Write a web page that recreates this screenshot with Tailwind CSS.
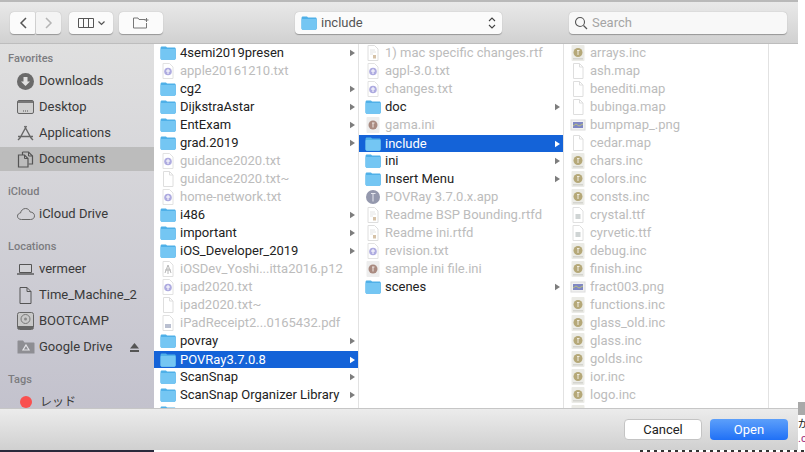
<!doctype html>
<html lang="ja">
<head>
<meta charset="UTF-8" />
<title>Open</title>
<script src="https://cdn.jsdelivr.net/npm/@tailwindcss/browser@4"></script>
</head>
<body class="w-[805px] h-[452px] overflow-hidden bg-white font-['Roboto','Noto_Sans_CJK_JP',sans-serif] text-[13px] text-[#222]">
<svg class="hidden">
  <symbol id="folder" viewBox="0 0 16 14"><path d="M.5 2.200C.5 1.200 1.100.6 2 .6h3.600c.7 0 1 .7 1.700 1h7c.9 0 1.500.6 1.500 1.500v9.200c0 .9-.6 1.500-1.500 1.500H2c-.9 0-1.500-.6-1.500-1.500z" fill="#4fb0e8"/><path d="M.5 4c0-.6.400-1 1-1h13c.6 0 1 .4 1 1v8.300c0 .9-.6 1.400-1.500 1.400H2c-.9 0-1.500-.5-1.500-1.400z" fill="#74c6f3"/></symbol>
  <symbol id="file" viewBox="0 0 16 16"><path d="M3.500.5h6l3.500 3.500v11.500h-9.500z M9.500.5v3.500h3.500" fill="#fff" stroke="#dedede"/></symbol>
  <symbol id="txt" viewBox="0 0 16 16"><path d="M3 .5h6.500l3.500 3.500v11.500h-10z" fill="#fff" stroke="#e2e2e2"/><circle cx="8" cy="8.500" r="3.800" fill="#aeabe0"/><path d="M6 8h4M8 6v5" stroke="#fff"/></symbol>
  <symbol id="rtf" viewBox="0 0 16 16"><path d="M3 .5h6.500l3.500 3.500v11.500h-10z" fill="#fff" stroke="#dedede"/><path d="M5 5h5M5 7h6M5 9h3" stroke="#e4e4e4"/><rect x="8" y="10" width="3" height="3.500" fill="#d6c2a8"/></symbol>
  <symbol id="inc" viewBox="0 0 16 16"><rect x="1.500" y="0" width="13" height="16" rx="1" fill="#ebebe6"/><circle cx="8" cy="7.500" r="4.500" fill="#b5a878"/><path d="M7 5.500h2.500M8 5.500v4.500" stroke="#f0ece0"/><rect x="3" y="13" width="10" height="1.500" fill="#d4d4ce"/></symbol>
  <symbol id="ini" viewBox="0 0 16 16"><rect x="1.500" y="0" width="13" height="16" rx="1" fill="#ededed"/><circle cx="8" cy="8" r="4.500" fill="#a98a80"/><path d="M7 6h2.500M8 6v4.500" stroke="#efe6e2"/></symbol>
  <symbol id="ttf" viewBox="0 0 16 16"><path d="M3 .5h6.500l3.500 3.500v11.500h-10z" fill="#fff" stroke="#e0e0e0"/><rect x="5.500" y="7" width="5" height="5" fill="#cfd4d4"/></symbol>
  <symbol id="png" viewBox="0 0 16 16"><rect x="1" y="3" width="14" height="10" fill="#f1f1f1" stroke="#dcdcdc"/><rect x="3" y="5" width="10" height="6" fill="#7f87c4"/><path d="M3 9l3-2 3 2 4-2" stroke="#b9c07e" fill="none"/></symbol>
  <symbol id="p12" viewBox="0 0 16 16"><path d="M3 .5h6.500l3.500 3.500v11.500h-10z" fill="#fff" stroke="#e0e0e0"/><path d="M8 4l-3 8M8 4l3 8M5 9h6M8 7v6" stroke="#b8b8b8" fill="none"/></symbol>
  <symbol id="pdf" viewBox="0 0 16 16"><path d="M3 .5h6.500l3.500 3.500v11.500h-10z" fill="#fff" stroke="#e0e0e0"/><rect x="5" y="9" width="6" height="4" fill="#b9bfd0"/></symbol>
  <symbol id="app" viewBox="0 0 16 16"><circle cx="8" cy="8" r="7" fill="#9498ad"/><path d="M6 4.500h4.500M8 4.500v8" stroke="#e6e7ee"/></symbol>
  <symbol id="arrow" viewBox="0 0 6 8"><path d="M0 0l6 4-6 4z" fill="currentColor"/></symbol>
</svg>

<div class="flex h-[450px]">
  <!-- Dialog -->
  <div class="w-[798px] flex flex-col shrink-0">
    <div class="h-[2px] bg-[#b9b9b9]"></div>

    <!-- Toolbar -->
    <div class="h-[42px] flex items-center bg-gradient-to-b from-[#e9e9e9] to-[#d1d1d1] border-b border-[#bdbdbd] pl-[10px] pt-[1px]">
      <button class="w-[25px] h-[22px] bg-[#fbfbfb] rounded-l-[4px] rounded-r-[1px] shadow-[0_0.5px_1px_rgba(0,0,0,0.3)] flex items-center justify-center" aria-label="Back">
        <svg width="8" height="12" viewBox="0 0 8 12"><path d="M7 1L2 6l5 5" fill="none" stroke="#555" stroke-width="1.500"/></svg>
      </button>
      <button class="ml-px w-[25px] h-[22px] bg-[#f4f4f4] rounded-r-[4px] rounded-l-[1px] shadow-[0_0.5px_1px_rgba(0,0,0,0.3)] flex items-center justify-center" aria-label="Forward">
        <svg width="8" height="12" viewBox="0 0 8 12"><path d="M1 1l5 5-5 5" fill="none" stroke="#b5b5b5" stroke-width="1.500"/></svg>
      </button>
      <button class="ml-[8px] w-[44px] h-[22px] bg-[#fbfbfb] rounded-[4px] shadow-[0_0.5px_1px_rgba(0,0,0,0.3)] flex items-center justify-center gap-[4px]" aria-label="View">
        <svg width="16" height="10" viewBox="0 0 16 10"><path d="M.5.500h15v9H.5zM5.500.500v9M10.500.500v9" fill="none" stroke="#555"/></svg>
        <svg width="7" height="5" viewBox="0 0 7 5"><path d="M.5.500l3 3 3-3" fill="none" stroke="#555" stroke-width="1.200"/></svg>
      </button>
      <button class="ml-[6px] w-[44px] h-[22px] bg-[#fbfbfb] rounded-[4px] shadow-[0_0.5px_1px_rgba(0,0,0,0.3)] flex items-center justify-center" aria-label="New Folder">
        <svg width="17" height="12" viewBox="0 0 17 12"><path d="M.5 1h4.500l1 1.500h6.500M.5 1v10h13V6" fill="none" stroke="#777"/><path d="M13.500 1v4M11.500 3h4" stroke="#777"/></svg>
      </button>

      <div class="ml-[132px] w-[207px] h-[22px] bg-[#fbfbfb] rounded-[4px] shadow-[0_0.5px_1px_rgba(0,0,0,0.3)] flex items-center pl-[6px] pr-[6px] text-[#555]">
        <svg class="w-[16px] h-[14px]"><use href="#folder"/></svg>
        <span class="ml-[4px] flex-1">include</span>
        <svg width="8" height="14" viewBox="0 0 8 14"><path d="M1 5l3-3 3 3M1 9l3 3 3-3" fill="none" stroke="#444" stroke-width="1.100"/></svg>
      </div>

      <div class="ml-[67px] w-[218px] h-[22px] bg-[#f8f8f8] rounded-[4px] shadow-[0_0.5px_1px_rgba(0,0,0,0.3)] flex items-center pl-[5px] text-[#a5a5a5]">
        <svg width="14" height="14" viewBox="0 0 14 14"><circle cx="6" cy="6" r="4.500" fill="none" stroke="#555" stroke-width="1.100"/><path d="M9.500 9.500l3.500 3.500" stroke="#555" stroke-width="1.300"/></svg>
        <span class="ml-[4px]">Search</span>
      </div>
    </div>

    <!-- Body -->
    <div class="h-[364px] flex overflow-hidden">
      <!-- Sidebar -->
      <aside class="w-[154px] shrink-0 bg-gradient-to-b from-[#e0e0e0] to-[#c3c2cd] text-[#3a3a3a] flex flex-col pt-[6px]">
        <div class="h-[18px] shrink-0 flex items-center pl-[8px] text-[11px] font-medium text-[#7c7c80]">Favorites</div>
        <div class="h-[26px] shrink-0 flex items-center pl-[17px] gap-[5px]">
          <svg width="17" height="17" viewBox="0 0 17 17"><circle cx="8.500" cy="8.500" r="8.500" fill="#6a6a6a"/><path d="M6.500 4h4v4.500H13L8.500 13 4 8.500h2.500z" fill="#e0e0e0"/></svg>
          <span>Downloads</span>
        </div>
        <div class="h-[26px] shrink-0 flex items-center pl-[17px] gap-[5px]">
          <svg width="17" height="14" viewBox="0 0 17 14"><rect x=".5" y=".5" width="16" height="13" rx="1.500" fill="#d0d0d0" stroke="#666"/><rect x="1" y="1" width="15" height="2" fill="#777"/><path d="M6 11h1M8 11h1M10 11h1" stroke="#555"/></svg>
          <span>Desktop</span>
        </div>
        <div class="h-[26px] shrink-0 flex items-center pl-[17px] gap-[5px]">
          <svg width="17" height="16" viewBox="0 0 17 16"><path d="M9.500 1L3 13M7.500 1L14 13M1 11.500h15M1 15l2-2M16 15l-2-2" fill="none" stroke="#666" stroke-width="1.400"/></svg>
          <span>Applications</span>
        </div>
        <div class="h-[24px] shrink-0 my-px flex items-center pl-[17px] gap-[5px] bg-[#bcbcbc]">
          <svg width="17" height="17" viewBox="0 0 17 17"><path d="M5.500 1h6l4 4v8h-4M5.500 1v3" fill="none" stroke="#555" stroke-width="1.200"/><path d="M1.500 4h6l3.500 3.500V16H1.500z" fill="none" stroke="#555" stroke-width="1.200"/><path d="M7.500 4v3.500H11M11.500 1v4h4" fill="none" stroke="#555"/></svg>
          <span>Documents</span>
        </div>

        <div class="mt-[11px] h-[18px] shrink-0 flex items-center pl-[8px] text-[11px] font-medium text-[#7c7c80]">iCloud</div>
        <div class="h-[26px] shrink-0 flex items-center pl-[17px] gap-[5px]">
          <svg width="18" height="12" viewBox="0 0 18 12"><path d="M4.500 11.500C2 11.500.5 10 .5 8.200c0-1.700 1.200-3 3-3.200C4 2.500 6 .5 8.500.5c2.400 0 4 1.500 4.600 3.500 2.600 0 4.400 1.700 4.400 3.800 0 2.100-1.500 3.700-4 3.700z" fill="none" stroke="#666"/></svg>
          <span class="-ml-px">iCloud Drive</span>
        </div>

        <div class="mt-[11px] h-[18px] shrink-0 flex items-center pl-[8px] text-[11px] font-medium text-[#7c7c80]">Locations</div>
        <div class="h-[26px] shrink-0 flex items-center pl-[17px] gap-[5px]">
          <svg width="17" height="11" viewBox="0 0 17 11"><path d="M2.500.5h12v8h-12z" fill="#d2d2d6" stroke="#555"/><path d="M0 10h17" stroke="#555" stroke-width="1.400"/></svg>
          <span>vermeer</span>
        </div>
        <div class="h-[26px] shrink-0 flex items-center pl-[17px] gap-[5px]">
          <svg width="17" height="17" viewBox="0 0 17 17"><path d="M3 .5h7l4 4v12H3zM10 .5v4h4" fill="none" stroke="#555"/></svg>
          <span>Time_Machine_2</span>
        </div>
        <div class="h-[26px] shrink-0 flex items-center pl-[17px] gap-[5px]">
          <svg width="17" height="18" viewBox="0 0 17 18"><rect x=".5" y=".5" width="16" height="17" rx="2" fill="#c8c8c8" stroke="#666"/><circle cx="8.500" cy="7" r="4.500" fill="none" stroke="#777"/><circle cx="8.500" cy="7" r="1.500" fill="#888"/><rect x="1" y="14" width="15" height="3" fill="#666"/></svg>
          <span>BOOTCAMP</span>
        </div>
        <div class="h-[26px] shrink-0 flex items-center pl-[17px] pr-[15px]">
          <svg width="18" height="14" viewBox="0 0 18 14"><path d="M.5 1.500c0-.6.400-1 1-1H6l1.500 2H16.500c.6 0 1 .4 1 1V13.500H.5z" fill="#8e8e93"/><path d="M9 5l3 5H6z" fill="none" stroke="#e4e4e8" stroke-width="1.200"/></svg>
          <span class="ml-[4px] flex-1">Google Drive</span>
          <svg width="9" height="9" viewBox="0 0 9 9"><path d="M4.500 0L9 5.500H0zM0 7h9v2H0z" fill="#555"/></svg>
        </div>

        <div class="mt-[11px] h-[18px] shrink-0 flex items-center pl-[8px] text-[11px] font-medium text-[#7c7c80]">Tags</div>
        <div class="h-[26px] shrink-0 flex items-center pl-[20px] gap-[8px]">
          <span class="w-[12px] h-[12px] rounded-full bg-[#f9504f]"></span>
          <span class="text-[12px]">レッド</span>
        </div>
      </aside>

      <!-- Column 1 -->
      <div class="w-[205px] shrink-0 bg-white border-r border-[#e2e2e2] overflow-hidden">
        <div class="h-[18px] flex items-center pl-[6px] pr-[3px]"><svg class="w-[16px] h-[14px] shrink-0"><use href="#folder"/></svg><span class="ml-[4px] flex-1">4semi2019presen</span><svg class="w-[5px] h-[8px] text-[#7d7d7d]"><use href="#arrow"/></svg></div>
        <div class="h-[18px] flex items-center pl-[6px] pr-[3px] text-[#bcbcbc]"><svg class="w-[16px] h-[16px] shrink-0"><use href="#txt"/></svg><span class="ml-[4px]">apple20161210.txt</span></div>
        <div class="h-[18px] flex items-center pl-[6px] pr-[3px]"><svg class="w-[16px] h-[14px] shrink-0"><use href="#folder"/></svg><span class="ml-[4px] flex-1">cg2</span><svg class="w-[5px] h-[8px] text-[#7d7d7d]"><use href="#arrow"/></svg></div>
        <div class="h-[18px] flex items-center pl-[6px] pr-[3px]"><svg class="w-[16px] h-[14px] shrink-0"><use href="#folder"/></svg><span class="ml-[4px] flex-1">DijkstraAstar</span><svg class="w-[5px] h-[8px] text-[#7d7d7d]"><use href="#arrow"/></svg></div>
        <div class="h-[18px] flex items-center pl-[6px] pr-[3px]"><svg class="w-[16px] h-[14px] shrink-0"><use href="#folder"/></svg><span class="ml-[4px] flex-1">EntExam</span><svg class="w-[5px] h-[8px] text-[#7d7d7d]"><use href="#arrow"/></svg></div>
        <div class="h-[18px] flex items-center pl-[6px] pr-[3px]"><svg class="w-[16px] h-[14px] shrink-0"><use href="#folder"/></svg><span class="ml-[4px] flex-1">grad.2019</span><svg class="w-[5px] h-[8px] text-[#7d7d7d]"><use href="#arrow"/></svg></div>
        <div class="h-[18px] flex items-center pl-[6px] pr-[3px] text-[#bcbcbc]"><svg class="w-[16px] h-[16px] shrink-0"><use href="#txt"/></svg><span class="ml-[4px]">guidance2020.txt</span></div>
        <div class="h-[18px] flex items-center pl-[6px] pr-[3px] text-[#bcbcbc]"><svg class="w-[16px] h-[16px] shrink-0"><use href="#file"/></svg><span class="ml-[4px]">guidance2020.txt~</span></div>
        <div class="h-[18px] flex items-center pl-[6px] pr-[3px] text-[#bcbcbc]"><svg class="w-[16px] h-[16px] shrink-0"><use href="#txt"/></svg><span class="ml-[4px]">home-network.txt</span></div>
        <div class="h-[18px] flex items-center pl-[6px] pr-[3px]"><svg class="w-[16px] h-[14px] shrink-0"><use href="#folder"/></svg><span class="ml-[4px] flex-1">i486</span><svg class="w-[5px] h-[8px] text-[#7d7d7d]"><use href="#arrow"/></svg></div>
        <div class="h-[18px] flex items-center pl-[6px] pr-[3px]"><svg class="w-[16px] h-[14px] shrink-0"><use href="#folder"/></svg><span class="ml-[4px] flex-1">important</span><svg class="w-[5px] h-[8px] text-[#7d7d7d]"><use href="#arrow"/></svg></div>
        <div class="h-[18px] flex items-center pl-[6px] pr-[3px]"><svg class="w-[16px] h-[14px] shrink-0"><use href="#folder"/></svg><span class="ml-[4px] flex-1">iOS_Developer_2019</span><svg class="w-[5px] h-[8px] text-[#7d7d7d]"><use href="#arrow"/></svg></div>
        <div class="h-[18px] flex items-center pl-[6px] pr-[3px] text-[#bcbcbc]"><svg class="w-[16px] h-[16px] shrink-0"><use href="#p12"/></svg><span class="ml-[4px]">iOSDev_Yoshi...itta2016.p12</span></div>
        <div class="h-[18px] flex items-center pl-[6px] pr-[3px] text-[#bcbcbc]"><svg class="w-[16px] h-[16px] shrink-0"><use href="#txt"/></svg><span class="ml-[4px]">ipad2020.txt</span></div>
        <div class="h-[18px] flex items-center pl-[6px] pr-[3px] text-[#bcbcbc]"><svg class="w-[16px] h-[16px] shrink-0"><use href="#file"/></svg><span class="ml-[4px]">ipad2020.txt~</span></div>
        <div class="h-[18px] flex items-center pl-[6px] pr-[3px] text-[#bcbcbc]"><svg class="w-[16px] h-[16px] shrink-0"><use href="#pdf"/></svg><span class="ml-[4px]">iPadReceipt2...0165432.pdf</span></div>
        <div class="h-[18px] flex items-center pl-[6px] pr-[3px]"><svg class="w-[16px] h-[14px] shrink-0"><use href="#folder"/></svg><span class="ml-[4px] flex-1">povray</span><svg class="w-[5px] h-[8px] text-[#7d7d7d]"><use href="#arrow"/></svg></div>
        <div class="h-[17px] mt-px flex items-center pl-[6px] pr-[3px] bg-[#1463d8] text-white"><svg class="w-[16px] h-[14px] shrink-0"><use href="#folder"/></svg><span class="ml-[4px] flex-1">POVRay3.7.0.8</span><svg class="w-[5px] h-[8px] text-white"><use href="#arrow"/></svg></div>
        <div class="h-[18px] flex items-center pl-[6px] pr-[3px]"><svg class="w-[16px] h-[14px] shrink-0"><use href="#folder"/></svg><span class="ml-[4px] flex-1">ScanSnap</span><svg class="w-[5px] h-[8px] text-[#7d7d7d]"><use href="#arrow"/></svg></div>
        <div class="h-[18px] flex items-center pl-[6px] pr-[3px]"><svg class="w-[16px] h-[14px] shrink-0"><use href="#folder"/></svg><span class="ml-[4px] flex-1">ScanSnap Organizer Library</span><svg class="w-[5px] h-[8px] text-[#7d7d7d]"><use href="#arrow"/></svg></div>
        <div class="h-[18px] flex items-center pl-[6px] pr-[3px]"><svg class="w-[16px] h-[14px] shrink-0"><use href="#folder"/></svg></div>
      </div>

      <!-- Column 2 -->
      <div class="w-[205px] shrink-0 bg-white border-r border-[#e2e2e2] overflow-hidden">
        <div class="h-[18px] flex items-center pl-[6px] pr-[3px] text-[#bcbcbc]"><svg class="w-[16px] h-[16px] shrink-0"><use href="#rtf"/></svg><span class="ml-[4px]">1) mac specific changes.rtf</span></div>
        <div class="h-[18px] flex items-center pl-[6px] pr-[3px] text-[#bcbcbc]"><svg class="w-[16px] h-[16px] shrink-0"><use href="#txt"/></svg><span class="ml-[4px]">agpl-3.0.txt</span></div>
        <div class="h-[18px] flex items-center pl-[6px] pr-[3px] text-[#bcbcbc]"><svg class="w-[16px] h-[16px] shrink-0"><use href="#txt"/></svg><span class="ml-[4px]">changes.txt</span></div>
        <div class="h-[18px] flex items-center pl-[6px] pr-[3px]"><svg class="w-[16px] h-[14px] shrink-0"><use href="#folder"/></svg><span class="ml-[4px] flex-1">doc</span><svg class="w-[5px] h-[8px] text-[#7d7d7d]"><use href="#arrow"/></svg></div>
        <div class="h-[18px] flex items-center pl-[6px] pr-[3px] text-[#bcbcbc]"><svg class="w-[16px] h-[16px] shrink-0"><use href="#ini"/></svg><span class="ml-[4px]">gama.ini</span></div>
        <div class="h-[17px] mt-px flex items-center pl-[6px] pr-[3px] bg-[#1463d8] text-white"><svg class="w-[16px] h-[14px] shrink-0"><use href="#folder"/></svg><span class="ml-[4px] flex-1">include</span><svg class="w-[5px] h-[8px] text-white"><use href="#arrow"/></svg></div>
        <div class="h-[18px] flex items-center pl-[6px] pr-[3px]"><svg class="w-[16px] h-[14px] shrink-0"><use href="#folder"/></svg><span class="ml-[4px] flex-1">ini</span><svg class="w-[5px] h-[8px] text-[#7d7d7d]"><use href="#arrow"/></svg></div>
        <div class="h-[18px] flex items-center pl-[6px] pr-[3px]"><svg class="w-[16px] h-[14px] shrink-0"><use href="#folder"/></svg><span class="ml-[4px] flex-1">Insert Menu</span><svg class="w-[5px] h-[8px] text-[#7d7d7d]"><use href="#arrow"/></svg></div>
        <div class="h-[18px] flex items-center pl-[6px] pr-[3px] text-[#bcbcbc]"><svg class="w-[16px] h-[16px] shrink-0"><use href="#app"/></svg><span class="ml-[4px]">POVRay 3.7.0.x.app</span></div>
        <div class="h-[18px] flex items-center pl-[6px] pr-[3px] text-[#bcbcbc]"><svg class="w-[16px] h-[16px] shrink-0"><use href="#rtf"/></svg><span class="ml-[4px]">Readme BSP Bounding.rtfd</span></div>
        <div class="h-[18px] flex items-center pl-[6px] pr-[3px] text-[#bcbcbc]"><svg class="w-[16px] h-[16px] shrink-0"><use href="#rtf"/></svg><span class="ml-[4px]">Readme ini.rtfd</span></div>
        <div class="h-[18px] flex items-center pl-[6px] pr-[3px] text-[#bcbcbc]"><svg class="w-[16px] h-[16px] shrink-0"><use href="#txt"/></svg><span class="ml-[4px]">revision.txt</span></div>
        <div class="h-[18px] flex items-center pl-[6px] pr-[3px] text-[#bcbcbc]"><svg class="w-[16px] h-[16px] shrink-0"><use href="#ini"/></svg><span class="ml-[4px]">sample ini file.ini</span></div>
        <div class="h-[18px] flex items-center pl-[6px] pr-[3px]"><svg class="w-[16px] h-[14px] shrink-0"><use href="#folder"/></svg><span class="ml-[4px] flex-1">scenes</span><svg class="w-[5px] h-[8px] text-[#7d7d7d]"><use href="#arrow"/></svg></div>
      </div>

      <!-- Column 3 -->
      <div class="w-[205px] shrink-0 bg-white border-r border-[#e2e2e2] overflow-hidden text-[#bcbcbc]">
        <div class="h-[18px] flex items-center pl-[6px]"><svg class="w-[16px] h-[16px] shrink-0"><use href="#inc"/></svg><span class="ml-[4px]">arrays.inc</span></div>
        <div class="h-[18px] flex items-center pl-[6px]"><svg class="w-[16px] h-[16px] shrink-0"><use href="#file"/></svg><span class="ml-[4px]">ash.map</span></div>
        <div class="h-[18px] flex items-center pl-[6px]"><svg class="w-[16px] h-[16px] shrink-0"><use href="#file"/></svg><span class="ml-[4px]">benediti.map</span></div>
        <div class="h-[18px] flex items-center pl-[6px]"><svg class="w-[16px] h-[16px] shrink-0"><use href="#file"/></svg><span class="ml-[4px]">bubinga.map</span></div>
        <div class="h-[18px] flex items-center pl-[6px]"><svg class="w-[16px] h-[16px] shrink-0"><use href="#png"/></svg><span class="ml-[4px]">bumpmap_.png</span></div>
        <div class="h-[18px] flex items-center pl-[6px]"><svg class="w-[16px] h-[16px] shrink-0"><use href="#file"/></svg><span class="ml-[4px]">cedar.map</span></div>
        <div class="h-[18px] flex items-center pl-[6px]"><svg class="w-[16px] h-[16px] shrink-0"><use href="#inc"/></svg><span class="ml-[4px]">chars.inc</span></div>
        <div class="h-[18px] flex items-center pl-[6px]"><svg class="w-[16px] h-[16px] shrink-0"><use href="#inc"/></svg><span class="ml-[4px]">colors.inc</span></div>
        <div class="h-[18px] flex items-center pl-[6px]"><svg class="w-[16px] h-[16px] shrink-0"><use href="#inc"/></svg><span class="ml-[4px]">consts.inc</span></div>
        <div class="h-[18px] flex items-center pl-[6px]"><svg class="w-[16px] h-[16px] shrink-0"><use href="#ttf"/></svg><span class="ml-[4px]">crystal.ttf</span></div>
        <div class="h-[18px] flex items-center pl-[6px]"><svg class="w-[16px] h-[16px] shrink-0"><use href="#ttf"/></svg><span class="ml-[4px]">cyrvetic.ttf</span></div>
        <div class="h-[18px] flex items-center pl-[6px]"><svg class="w-[16px] h-[16px] shrink-0"><use href="#inc"/></svg><span class="ml-[4px]">debug.inc</span></div>
        <div class="h-[18px] flex items-center pl-[6px]"><svg class="w-[16px] h-[16px] shrink-0"><use href="#inc"/></svg><span class="ml-[4px]">finish.inc</span></div>
        <div class="h-[18px] flex items-center pl-[6px]"><svg class="w-[16px] h-[16px] shrink-0"><use href="#png"/></svg><span class="ml-[4px]">fract003.png</span></div>
        <div class="h-[18px] flex items-center pl-[6px]"><svg class="w-[16px] h-[16px] shrink-0"><use href="#inc"/></svg><span class="ml-[4px]">functions.inc</span></div>
        <div class="h-[18px] flex items-center pl-[6px]"><svg class="w-[16px] h-[16px] shrink-0"><use href="#inc"/></svg><span class="ml-[4px]">glass_old.inc</span></div>
        <div class="h-[18px] flex items-center pl-[6px]"><svg class="w-[16px] h-[16px] shrink-0"><use href="#inc"/></svg><span class="ml-[4px]">glass.inc</span></div>
        <div class="h-[18px] flex items-center pl-[6px]"><svg class="w-[16px] h-[16px] shrink-0"><use href="#inc"/></svg><span class="ml-[4px]">golds.inc</span></div>
        <div class="h-[18px] flex items-center pl-[6px]"><svg class="w-[16px] h-[16px] shrink-0"><use href="#inc"/></svg><span class="ml-[4px]">ior.inc</span></div>
        <div class="h-[18px] flex items-center pl-[6px]"><svg class="w-[16px] h-[16px] shrink-0"><use href="#inc"/></svg><span class="ml-[4px]">logo.inc</span></div>
        <div class="h-[18px] flex items-center pl-[6px]"><svg class="w-[16px] h-[16px] shrink-0"><use href="#inc"/></svg></div>
      </div>

      <!-- Empty column -->
      <div class="flex-1 bg-white"></div>
    </div>

    <!-- Footer -->
    <div class="h-[42px] flex items-center justify-end gap-[8px] pr-[10px] bg-gradient-to-b from-[#ececec] to-[#d0d0d0] border-t border-[#c6c6c6]">
      <button class="w-[78px] h-[21px] bg-white rounded-[4px] border border-[#c4c4c4] text-[#222]">Cancel</button>
      <button class="w-[78px] h-[21px] rounded-[4px] bg-gradient-to-b from-[#5c9ffa] to-[#1f70f6] text-white">Open</button>
    </div>
  </div>

  <!-- Desktop behind the dialog -->
  <div class="flex-1 flex flex-col overflow-hidden">
    <div class="h-[402px] shrink-0"></div>
    <div class="h-[13px] shrink-0 bg-[#a9a9a9]"></div>
    <div class="h-[3px] shrink-0"></div>
    <div class="text-[11px] leading-[14px] text-[#222]">が</div>
    <div class="text-[11px] leading-[14px] text-[#a0287a]">.c</div>
  </div>
</div>

<!-- Strip below the dialog -->
<div class="h-[2px] flex">
  <div class="w-[154px] bg-[#2a2a3c]"></div>
  <div class="flex-1 flex items-start justify-end bg-white">
    <div class="w-[165px] h-[2px] bg-[repeating-linear-gradient(90deg,#333_0,#333_3px,transparent_3px,transparent_7px)]"></div>
  </div>
</div>
</body>
</html>
